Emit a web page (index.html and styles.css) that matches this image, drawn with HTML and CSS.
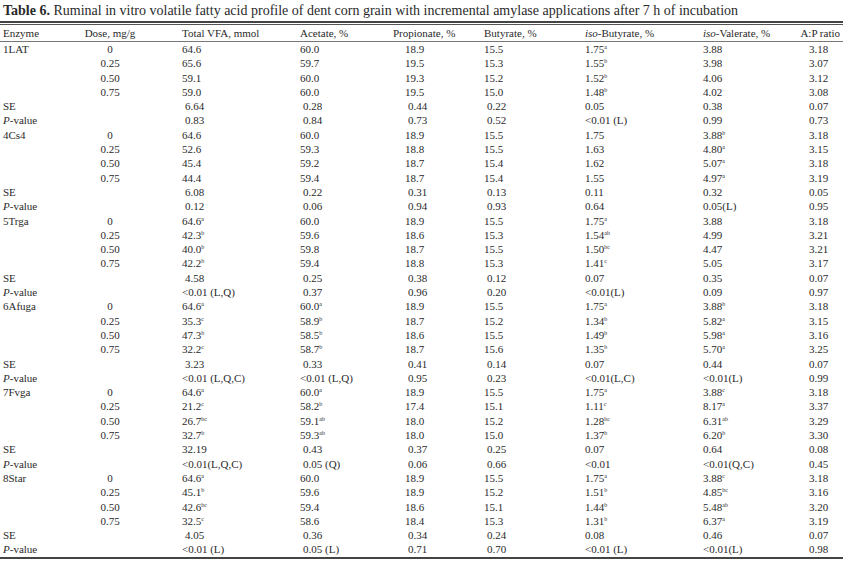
FILE: index.html
```html
<!DOCTYPE html>
<html lang="en">
<head>
<meta charset="utf-8">
<title>Table 6</title>
<link rel="stylesheet" href="styles.css">
</head>
<body>
<div class="page">
  <div class="caption"><b>Table 6.</b> Ruminal in vitro volatile fatty acid profile of dent corn grain with incremental amylase applications after 7 h of incubation</div>
  <div class="toprule"></div>
  <table class="vfa">
    <colgroup>
      <col class="w1"><col class="w2"><col class="w3"><col class="w4"><col class="w5"><col class="w6"><col class="w7"><col class="w8"><col class="w9">
    </colgroup>
    <thead>
      <tr>
        <th class="c1">Enzyme</th>
        <th class="c2">Dose, mg/g</th>
        <th class="c3">Total VFA, mmol</th>
        <th class="c4">Acetate, %</th>
        <th class="c5 h5">Propionate, %</th>
        <th class="c6">Butyrate, %</th>
        <th class="c7"><i>iso</i>-Butyrate, %</th>
        <th class="c8"><i>iso</i>-Valerate, %</th>
        <th class="c9 h9">A:P ratio</th>
      </tr>
    </thead>
    <tbody>
      <tr><td class="c1">1LAT</td><td class="c2">0</td><td class="c3">64.6</td><td class="c4">60.0</td><td class="c5">18.9</td><td class="c6">15.5</td><td class="c7">1.75<sup>a</sup></td><td class="c8">3.88</td><td class="c9">3.18</td></tr>
      <tr><td class="c1"></td><td class="c2">0.25</td><td class="c3">65.6</td><td class="c4">59.7</td><td class="c5">19.5</td><td class="c6">15.3</td><td class="c7">1.55<sup>b</sup></td><td class="c8">3.98</td><td class="c9">3.07</td></tr>
      <tr><td class="c1"></td><td class="c2">0.50</td><td class="c3">59.1</td><td class="c4">60.0</td><td class="c5">19.3</td><td class="c6">15.2</td><td class="c7">1.52<sup>b</sup></td><td class="c8">4.06</td><td class="c9">3.12</td></tr>
      <tr><td class="c1"></td><td class="c2">0.75</td><td class="c3">59.0</td><td class="c4">60.0</td><td class="c5">19.5</td><td class="c6">15.0</td><td class="c7">1.48<sup>b</sup></td><td class="c8">4.02</td><td class="c9">3.08</td></tr>
      <tr><td class="c1">SE</td><td class="c2"></td><td class="c3 i">6.64</td><td class="c4 i">0.28</td><td class="c5 i">0.44</td><td class="c6 i">0.22</td><td class="c7">0.05</td><td class="c8">0.38</td><td class="c9">0.07</td></tr>
      <tr><td class="c1"><i>P</i>-value</td><td class="c2"></td><td class="c3 i">0.83</td><td class="c4 i">0.84</td><td class="c5 i">0.73</td><td class="c6 i">0.52</td><td class="c7">&lt;0.01 (L)</td><td class="c8">0.99</td><td class="c9">0.73</td></tr>

      <tr><td class="c1">4Cs4</td><td class="c2">0</td><td class="c3">64.6</td><td class="c4">60.0</td><td class="c5">18.9</td><td class="c6">15.5</td><td class="c7">1.75</td><td class="c8">3.88<sup>b</sup></td><td class="c9">3.18</td></tr>
      <tr><td class="c1"></td><td class="c2">0.25</td><td class="c3">52.6</td><td class="c4">59.3</td><td class="c5">18.8</td><td class="c6">15.5</td><td class="c7">1.63</td><td class="c8">4.80<sup>a</sup></td><td class="c9">3.15</td></tr>
      <tr><td class="c1"></td><td class="c2">0.50</td><td class="c3">45.4</td><td class="c4">59.2</td><td class="c5">18.7</td><td class="c6">15.4</td><td class="c7">1.62</td><td class="c8">5.07<sup>a</sup></td><td class="c9">3.18</td></tr>
      <tr><td class="c1"></td><td class="c2">0.75</td><td class="c3">44.4</td><td class="c4">59.4</td><td class="c5">18.7</td><td class="c6">15.4</td><td class="c7">1.55</td><td class="c8">4.97<sup>a</sup></td><td class="c9">3.19</td></tr>
      <tr><td class="c1">SE</td><td class="c2"></td><td class="c3 i">6.08</td><td class="c4 i">0.22</td><td class="c5 i">0.31</td><td class="c6 i">0.13</td><td class="c7">0.11</td><td class="c8">0.32</td><td class="c9">0.05</td></tr>
      <tr><td class="c1"><i>P</i>-value</td><td class="c2"></td><td class="c3 i">0.12</td><td class="c4 i">0.06</td><td class="c5 i">0.94</td><td class="c6 i">0.93</td><td class="c7">0.64</td><td class="c8">0.05(L)</td><td class="c9">0.95</td></tr>

      <tr><td class="c1">5Trga</td><td class="c2">0</td><td class="c3">64.6<sup>a</sup></td><td class="c4">60.0</td><td class="c5">18.9</td><td class="c6">15.5</td><td class="c7">1.75<sup>a</sup></td><td class="c8">3.88</td><td class="c9">3.18</td></tr>
      <tr><td class="c1"></td><td class="c2">0.25</td><td class="c3">42.3<sup>b</sup></td><td class="c4">59.6</td><td class="c5">18.6</td><td class="c6">15.3</td><td class="c7">1.54<sup>ab</sup></td><td class="c8">4.99</td><td class="c9">3.21</td></tr>
      <tr><td class="c1"></td><td class="c2">0.50</td><td class="c3">40.0<sup>b</sup></td><td class="c4">59.8</td><td class="c5">18.7</td><td class="c6">15.5</td><td class="c7">1.50<sup>bc</sup></td><td class="c8">4.47</td><td class="c9">3.21</td></tr>
      <tr><td class="c1"></td><td class="c2">0.75</td><td class="c3">42.2<sup>b</sup></td><td class="c4">59.4</td><td class="c5">18.8</td><td class="c6">15.3</td><td class="c7">1.41<sup>c</sup></td><td class="c8">5.05</td><td class="c9">3.17</td></tr>
      <tr><td class="c1">SE</td><td class="c2"></td><td class="c3 i">4.58</td><td class="c4 i">0.25</td><td class="c5 i">0.38</td><td class="c6 i">0.12</td><td class="c7">0.07</td><td class="c8">0.35</td><td class="c9">0.07</td></tr>
      <tr><td class="c1"><i>P</i>-value</td><td class="c2"></td><td class="c3">&lt;0.01 (L,Q)</td><td class="c4 i">0.37</td><td class="c5 i">0.96</td><td class="c6 i">0.20</td><td class="c7">&lt;0.01(L)</td><td class="c8">0.09</td><td class="c9">0.97</td></tr>

      <tr><td class="c1">6Afuga</td><td class="c2">0</td><td class="c3">64.6<sup>a</sup></td><td class="c4">60.0<sup>a</sup></td><td class="c5">18.9</td><td class="c6">15.5</td><td class="c7">1.75<sup>a</sup></td><td class="c8">3.88<sup>b</sup></td><td class="c9">3.18</td></tr>
      <tr><td class="c1"></td><td class="c2">0.25</td><td class="c3">35.3<sup>c</sup></td><td class="c4">58.9<sup>b</sup></td><td class="c5">18.7</td><td class="c6">15.2</td><td class="c7">1.34<sup>b</sup></td><td class="c8">5.82<sup>a</sup></td><td class="c9">3.15</td></tr>
      <tr><td class="c1"></td><td class="c2">0.50</td><td class="c3">47.3<sup>b</sup></td><td class="c4">58.5<sup>b</sup></td><td class="c5">18.6</td><td class="c6">15.5</td><td class="c7">1.49<sup>b</sup></td><td class="c8">5.98<sup>a</sup></td><td class="c9">3.16</td></tr>
      <tr><td class="c1"></td><td class="c2">0.75</td><td class="c3">32.2<sup>c</sup></td><td class="c4">58.7<sup>b</sup></td><td class="c5">18.7</td><td class="c6">15.6</td><td class="c7">1.35<sup>b</sup></td><td class="c8">5.70<sup>a</sup></td><td class="c9">3.25</td></tr>
      <tr><td class="c1">SE</td><td class="c2"></td><td class="c3 i">3.23</td><td class="c4 i">0.33</td><td class="c5 i">0.41</td><td class="c6 i">0.14</td><td class="c7">0.07</td><td class="c8">0.44</td><td class="c9">0.07</td></tr>
      <tr><td class="c1"><i>P</i>-value</td><td class="c2"></td><td class="c3">&lt;0.01 (L,Q,C)</td><td class="c4">&lt;0.01 (L,Q)</td><td class="c5 i">0.95</td><td class="c6 i">0.23</td><td class="c7">&lt;0.01(L,C)</td><td class="c8">&lt;0.01(L)</td><td class="c9">0.99</td></tr>

      <tr><td class="c1">7Fvga</td><td class="c2">0</td><td class="c3">64.6<sup>a</sup></td><td class="c4">60.0<sup>a</sup></td><td class="c5">18.9</td><td class="c6">15.5</td><td class="c7">1.75<sup>a</sup></td><td class="c8">3.88<sup>c</sup></td><td class="c9">3.18</td></tr>
      <tr><td class="c1"></td><td class="c2">0.25</td><td class="c3">21.2<sup>c</sup></td><td class="c4">58.2<sup>b</sup></td><td class="c5">17.4</td><td class="c6">15.1</td><td class="c7">1.11<sup>c</sup></td><td class="c8">8.17<sup>a</sup></td><td class="c9">3.37</td></tr>
      <tr><td class="c1"></td><td class="c2">0.50</td><td class="c3">26.7<sup>bc</sup></td><td class="c4">59.1<sup>ab</sup></td><td class="c5">18.0</td><td class="c6">15.2</td><td class="c7">1.28<sup>bc</sup></td><td class="c8">6.31<sup>ab</sup></td><td class="c9">3.29</td></tr>
      <tr><td class="c1"></td><td class="c2">0.75</td><td class="c3">32.7<sup>b</sup></td><td class="c4">59.3<sup>ab</sup></td><td class="c5">18.0</td><td class="c6">15.0</td><td class="c7">1.37<sup>b</sup></td><td class="c8">6.20<sup>b</sup></td><td class="c9">3.30</td></tr>
      <tr><td class="c1">SE</td><td class="c2"></td><td class="c3">32.19</td><td class="c4 i">0.43</td><td class="c5 i">0.37</td><td class="c6 i">0.25</td><td class="c7">0.07</td><td class="c8">0.64</td><td class="c9">0.08</td></tr>
      <tr><td class="c1"><i>P</i>-value</td><td class="c2"></td><td class="c3">&lt;0.01(L,Q,C)</td><td class="c4 i">0.05 (Q)</td><td class="c5 i">0.06</td><td class="c6 i">0.66</td><td class="c7">&lt;0.01</td><td class="c8">&lt;0.01(Q,C)</td><td class="c9">0.45</td></tr>

      <tr><td class="c1">8Star</td><td class="c2">0</td><td class="c3">64.6<sup>a</sup></td><td class="c4">60.0</td><td class="c5">18.9</td><td class="c6">15.5</td><td class="c7">1.75<sup>a</sup></td><td class="c8">3.88<sup>c</sup></td><td class="c9">3.18</td></tr>
      <tr><td class="c1"></td><td class="c2">0.25</td><td class="c3">45.1<sup>b</sup></td><td class="c4">59.6</td><td class="c5">18.9</td><td class="c6">15.2</td><td class="c7">1.51<sup>b</sup></td><td class="c8">4.85<sup>bc</sup></td><td class="c9">3.16</td></tr>
      <tr><td class="c1"></td><td class="c2">0.50</td><td class="c3">42.6<sup>bc</sup></td><td class="c4">59.4</td><td class="c5">18.6</td><td class="c6">15.1</td><td class="c7">1.44<sup>b</sup></td><td class="c8">5.48<sup>ab</sup></td><td class="c9">3.20</td></tr>
      <tr><td class="c1"></td><td class="c2">0.75</td><td class="c3">32.5<sup>c</sup></td><td class="c4">58.6</td><td class="c5">18.4</td><td class="c6">15.3</td><td class="c7">1.31<sup>b</sup></td><td class="c8">6.37<sup>a</sup></td><td class="c9">3.19</td></tr>
      <tr><td class="c1">SE</td><td class="c2"></td><td class="c3 i">4.05</td><td class="c4 i">0.36</td><td class="c5 i">0.34</td><td class="c6 i">0.24</td><td class="c7">0.08</td><td class="c8">0.46</td><td class="c9">0.07</td></tr>
      <tr><td class="c1"><i>P</i>-value</td><td class="c2"></td><td class="c3">&lt;0.01 (L)</td><td class="c4 i">0.05 (L)</td><td class="c5 i">0.71</td><td class="c6 i">0.70</td><td class="c7">&lt;0.01 (L)</td><td class="c8">&lt;0.01(L)</td><td class="c9">0.98</td></tr>
    </tbody>
  </table>
</div>
</body>
</html>
```
FILE: styles.css
```css
html, body {
  margin: 0;
  padding: 0;
  background: #ffffff;
}

.page {
  width: 843px;
  font-family: "Liberation Serif", "Times New Roman", serif;
  color: #2a2a2a;
}

.caption {
  font-size: 14px;
  line-height: 20px;
  padding: 1px 0 0 3px;
  height: 20px;
  white-space: nowrap;
}

.caption b {
  font-weight: bold;
}

.toprule {
  height: 1px;
  border-top: 2px solid #444444;
  border-bottom: 1px solid #555555;
}

.vfa {
  width: 843px;
  border-collapse: collapse;
  table-layout: fixed;
  font-size: 11px;
}

.w1 { width: 62px; }
.w2 { width: 96px; }
.w3 { width: 130px; }
.w4 { width: 100px; }
.w5 { width: 90px; }
.w6 { width: 94px; }
.w7 { width: 110px; }
.w8 { width: 110px; }
.w9 { width: 51px; }

.vfa th {
  font-weight: normal;
  text-align: left;
  height: 16px;
  line-height: 16px;
  padding-top: 0;
  padding-bottom: 0;
  vertical-align: middle;
  border-bottom: 1px solid #777777;
  white-space: nowrap;
}

.vfa td {
  height: 14.3px;
  line-height: 14.3px;
  padding-top: 0;
  padding-bottom: 0;
  text-align: left;
  white-space: nowrap;
  vertical-align: middle;
}

.vfa tbody tr:last-child td {
  border-bottom: 2px solid #444444;
}

.c1 { padding-left: 3px; padding-right: 0; }
.c2 { text-align: center !important; padding-left: 0; padding-right: 0; }
.c3 { padding-left: 24px; }
.c4 { padding-left: 12px; }
.c5 { padding-left: 17px; }
.c6 { padding-left: 6px; }
.c7 { padding-left: 13px; }
.c8 { padding-left: 21px; }
.c9 { padding-left: 17px; }

.vfa th.h5 { padding-left: 5px; }
.vfa th.h9 { padding-left: 0; text-align: right; padding-right: 3px; }

.vfa td.c3.i { padding-left: 27px; }
.vfa td.c4.i { padding-left: 15px; }
.vfa td.c5.i { padding-left: 20px; }
.vfa td.c6.i { padding-left: 9px; }

sup {
  font-size: 6px;
  line-height: 0;
  vertical-align: 4px;
}
```
